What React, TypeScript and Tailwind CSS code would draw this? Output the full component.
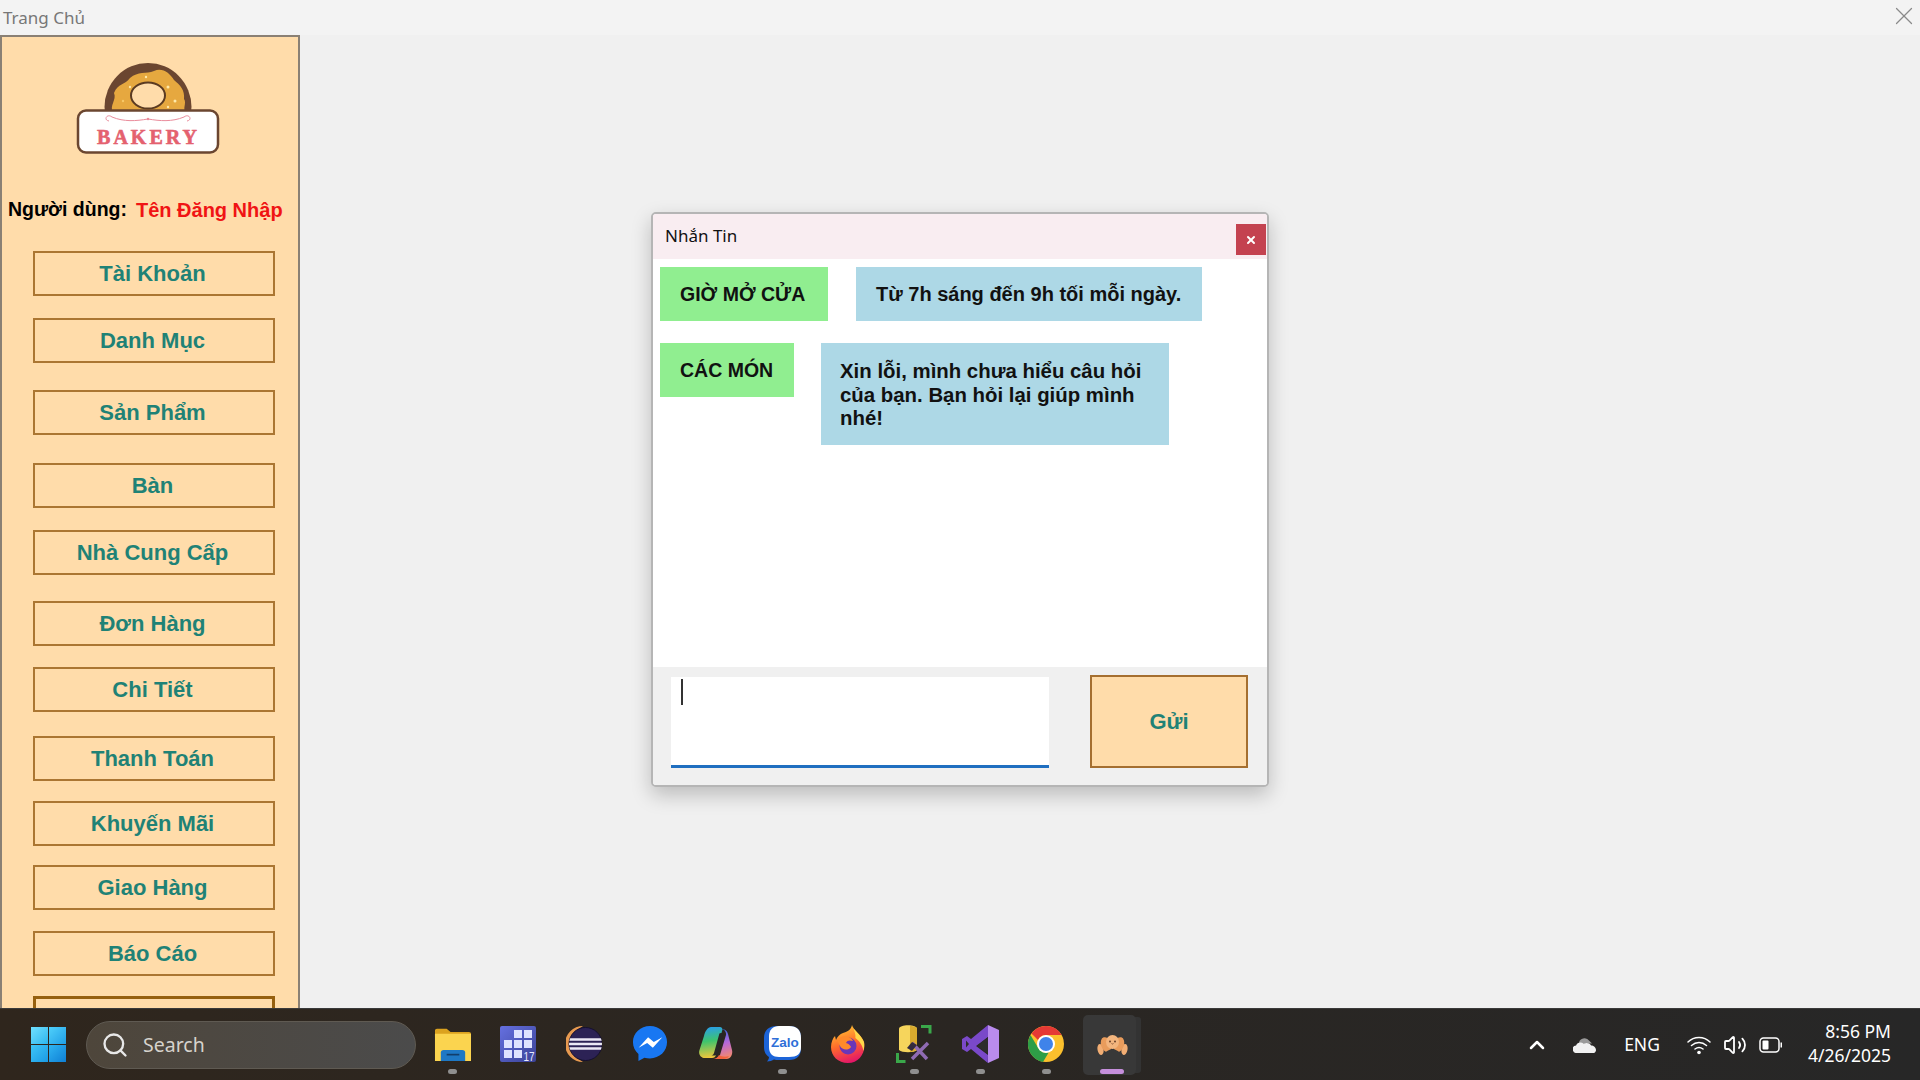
import { ChevronUp, Search, Volume2, X } from "lucide-react";

const menu = [
  { label: "Tài Khoản", cls: "mt-[31px]" },
  { label: "Danh Mục", cls: "mt-[22px]" },
  { label: "Sản Phẩm", cls: "mt-[27px]" },
  { label: "Bàn", cls: "mt-[28px]" },
  { label: "Nhà Cung Cấp", cls: "mt-[22px]" },
  { label: "Đơn Hàng", cls: "mt-[26px]" },
  { label: "Chi Tiết", cls: "mt-[21px]" },
  { label: "Thanh Toán", cls: "mt-[24px]" },
  { label: "Khuyến Mãi", cls: "mt-[20px]" },
  { label: "Giao Hàng", cls: "mt-[19px]" },
  { label: "Báo Cáo", cls: "mt-[21px]" },
];

function Logo() {
  return (
    <svg width="146" height="94" viewBox="0 0 146 94" className="block">
      <ellipse cx="72" cy="44" rx="43.500" ry="44" fill="#6b4630" />
      <path
        d="M37 50C33 42 41 37 38 30 42 20 49 22 54 15 62 8 70 11 78 8 86 4 94 10 98 17 104 22 109 27 108 36 111 40 106 46 110 50Z"
        fill="#e6a83f"
      />
      <circle cx="92" cy="24" r="1.500" fill="#ffe9a8" />
      <circle cx="99" cy="38" r="1.500" fill="#ffe9a8" />
      <circle cx="54" cy="24" r="1.200" fill="#ffe9a8" />
      <circle cx="92" cy="44" r="1.200" fill="#ffe9a8" />
      <circle cx="70" cy="14" r="1.200" fill="#ffe9a8" />
      <circle cx="47" cy="38" r="1.200" fill="#f6c868" />
      <ellipse cx="72" cy="32.500" rx="17" ry="13" fill="#ffdcaa" stroke="#5b3b22" strokeWidth="2" />
      <rect x="2" y="47.500" width="140" height="42" rx="8" fill="#fff" stroke="#6b4630" strokeWidth="2.500" />
      <path
        d="M36 54c-5-4-9 3-3 4M108 54c5-4 9 3 3 4M36 54c12 5 24 4 36 2 12 2 24 3 36-2"
        fill="none"
        stroke="#ea8c9c"
        strokeWidth="1"
      />
      <circle cx="72" cy="56" r="1.200" fill="#ea8c9c" />
      <text
        x="72.500"
        y="81"
        textAnchor="middle"
        fill="#e4616f"
        stroke="#e4616f"
        strokeWidth="0.600"
        fontFamily="'Liberation Serif', serif"
        fontWeight="700"
        fontSize="20"
        letterSpacing="3"
      >
        BAKERY
      </text>
    </svg>
  );
}

function Folder() {
  return (
    <svg width="37" height="34" viewBox="0 0 38 40" preserveAspectRatio="none">
      <path d="M1 4a2 2 0 0 1 2-2h10l4 4h19a2 2 0 0 1 2 2v4H1z" fill="#dba21f" />
      <path d="M1 8h37v32H1z" fill="#fbd44f" />
      <path d="M7 40v-10a3 3 0 0 1 3-3h19a3 3 0 0 1 3 3v10z" fill="#1e78c4" />
      <path d="M13 32.500h13" stroke="#123e6b" strokeWidth="2" />
    </svg>
  );
}

function GridApp() {
  return (
    <svg width="36" height="36" viewBox="0 0 36 36">
      <defs>
        <linearGradient id="gra" x1="0" y1="0" x2="1" y2="1">
          <stop offset="0" stopColor="#6570e0" />
          <stop offset="1" stopColor="#3a4296" />
        </linearGradient>
      </defs>
      <rect width="36" height="36" rx="2" fill="url(#gra)" />
      {[
        [14, 4],
        [24, 4],
        [4, 14],
        [14, 14],
        [24, 14],
        [4, 24],
        [14, 24],
      ].map(([x, y]) => (
        <rect key={`${x}-${y}`} x={x} y={y} width="8" height="8" fill="#dfe3ff" />
      ))}
      <text x="23.500" y="34.500" fill="#e8eaff" fontFamily="'Liberation Sans', sans-serif" fontSize="12.500" textLength="11" lengthAdjust="spacingAndGlyphs">
        17
      </text>
    </svg>
  );
}

function Eclipse() {
  return (
    <svg width="36" height="36" viewBox="0 0 36 36">
      <defs>
        <clipPath id="ecl">
          <circle cx="19.500" cy="18" r="16.500" />
        </clipPath>
      </defs>
      <path d="M17 0a18 18 0 0 0 0 36A20 20 0 0 1 17 0z" fill="#e89a50" />
      <circle cx="19.500" cy="18" r="16.500" fill="#2c2255" stroke="#15102e" strokeWidth="1" />
      <g clipPath="url(#ecl)">
        <path d="M2 13.500h36M2 18h36M2 22.500h36" stroke="#ebe8f5" strokeWidth="2.400" />
      </g>
    </svg>
  );
}

function Messenger() {
  return (
    <svg width="36" height="38" viewBox="0 0 38 40">
      <path
        d="M19 1C9 1 1 8.400 1 18c0 5 2.200 9.500 5.800 12.500V38l6.300-3.600c1.900.5 3.800.8 5.900.8 10 0 18-7.400 18-17.200S29 1 19 1z"
        fill="#1877f2"
      />
      <path d="M7 24l10-11 6 5 9-5-10 11-6-5z" fill="#fff" />
    </svg>
  );
}

function Copilot() {
  return (
    <svg width="34" height="36" viewBox="0 0 34 36">
      <defs>
        <linearGradient id="cpa" x1="0.4" y1="0" x2="0.5" y2="1">
          <stop offset="0" stopColor="#2a9fe8" />
          <stop offset="0.45" stopColor="#3ec46d" />
          <stop offset="1" stopColor="#f4c53a" />
        </linearGradient>
        <linearGradient id="cpb" x1="0.4" y1="0" x2="0.6" y2="1">
          <stop offset="0" stopColor="#3569e0" />
          <stop offset="0.5" stopColor="#b868d8" />
          <stop offset="1" stopColor="#f58a6a" />
        </linearGradient>
      </defs>
      <path d="M22 3c3 0 6 1 7 5l4 16c1 4-1 9-6 9H15c3 0 5-2 6-4l6-20c.5-2-1-6-5-6z" fill="url(#cpb)" />
      <path d="M12 1h9c2 0 3 2 2 4l-6 24c-.5 2-2 3-4 3H6c-4 0-7-4-5.500-8L5 10c1-5 4-9 7-9z" fill="url(#cpa)" />
      <path d="M20 9l-5 18c-.5 1.500-1.500 2.500-2.500 2.500h3.500c1.500 0 2.500-1 3-2.500l5-18c.3-1.500-.3-2-2-2s-1.700.8-2 2z" fill="#262626" />
      <path d="M20 29c-1 2-3 4-6 4h11c2 0 4-1 5-3-3 1-7 1-10-1z" fill="#f0623e" />
    </svg>
  );
}

function Zalo() {
  return (
    <svg width="37" height="36" viewBox="0 0 37 36">
      <path d="M13 0h12c8 0 12 4 12 12v10c0 8-4 12-12 12H15c-2 0-4 0-5-.5-2 1-4 2-7 2 1-1 2-3 2-4.500C2 29 0 26 0 21V12C0 4 5 0 13 0z" fill="#1c64d8" />
      <path d="M15 0h10c8 0 12 4 12 12v9c0 7-4 10-12 10H15c-6 0-10-3-10-10V10C5 4 9 0 15 0z" fill="#fff" />
      <text x="21" y="21" textAnchor="middle" fill="#2f6fd8" fontFamily="'Liberation Sans', sans-serif" fontWeight="700" fontSize="13.500">
        Zalo
      </text>
    </svg>
  );
}

function Firefox() {
  return (
    <svg width="34" height="38" viewBox="0 0 34 38">
      <defs>
        <linearGradient id="ffa" x1="0.3" y1="0" x2="0.6" y2="1">
          <stop offset="0" stopColor="#ffc933" />
          <stop offset="0.5" stopColor="#ff6b2b" />
          <stop offset="1" stopColor="#e3136a" />
        </linearGradient>
      </defs>
      <path d="M21 0c1 5 9 9 12 17 2 11-5 21-16 21C7 38 0 31 0 22c0-5 2-9 4-11l1 4c1-3 4-6 7-7 4-1 8-3 9-8z" fill="url(#ffa)" />
      <path d="M21 0c1 5 9 9 12 17 .5 3 .3 6-.6 9-1-6-4-10-8-13C25 9 23 5 21 0z" fill="#ffd84a" />
      <circle cx="17" cy="21" r="8.500" fill="#6a36b8" />
      <path d="M6 15c4-5 13-5 16 1-3-1-6-1-7 2 4 1 5 4 5 4-3 4-9 3-11-1-1-2-2-4-3-6z" fill="#ff8a2b" />
    </svg>
  );
}

function DbTools() {
  return (
    <svg width="36" height="40" viewBox="0 0 36 40">
      <path d="M25 2.500h9v7M1.500 29v8.500h8" fill="none" stroke="#3aa84a" strokeWidth="3" />
      <path d="M3 5c0-5 18-5 18 0v21c-3 3-15 3-18 0z" fill="#f6d55c" />
      <path d="M14 2c4 0 7 1 7 3v21c-2 1-5 2-7 2z" fill="#d9ab2e" />
      <path d="M16 19l15 16M32 19L16 35" stroke="#8f6bb3" strokeWidth="3.500" />
      <path d="M11 24l5-6 5 3-5 6z" fill="#332b3d" />
    </svg>
  );
}

function VisualStudio() {
  return (
    <svg width="37" height="38" viewBox="0 0 37 38">
      <path d="M26 0l11 5v28l-11 5z" fill="#b98bed" />
      <path d="M26 0v12L14 21l12 9-.2 8L9 24l-4 3-5-3V14l5-3 4 3z" fill="#7a49c9" />
      <path d="M4 15.500v7l3-3.500z" fill="#2c2c2c" />
      <path d="M26 12v17l-11-8z" fill="#2c2c2c" />
    </svg>
  );
}

function Chrome() {
  return (
    <svg width="36" height="36" viewBox="0 0 36 36">
      <circle cx="18" cy="18" r="18" fill="#fbc02d" />
      <path d="M18 0a18 18 0 0 1 15.600 9H18a9 9 0 0 0-8 5L3.500 7.500A18 18 0 0 1 18 0z" fill="#e53935" />
      <path d="M2.500 9L10.200 22a9 9 0 0 0 10.500 4.500L15 36A18 18 0 0 1 2.500 9z" fill="#2e9e47" />
      <circle cx="18" cy="18" r="9" fill="#fff" />
      <circle cx="18" cy="18" r="7" fill="#3f83ea" />
    </svg>
  );
}

function Croissant() {
  return (
    <svg width="31" height="20" viewBox="0 0 31 20">
      <ellipse cx="3.500" cy="14.500" rx="3" ry="5.500" transform="rotate(-10 3.500 14.500)" fill="#f2ae74" />
      <ellipse cx="27.500" cy="14.500" rx="3" ry="5.500" transform="rotate(10 27.500 14.500)" fill="#f2ae74" />
      <ellipse cx="9" cy="9.500" rx="5" ry="7.500" transform="rotate(-18 9 9.500)" fill="#e99c5c" />
      <ellipse cx="22" cy="9.500" rx="5" ry="7.500" transform="rotate(18 22 9.500)" fill="#e99c5c" />
      <ellipse cx="15.500" cy="7" rx="6.500" ry="7" fill="#f3b57e" />
      <ellipse cx="15.500" cy="19.500" rx="7.500" ry="5" fill="#383838" />
      <circle cx="13" cy="6.500" r="0.900" fill="#5b3420" />
      <circle cx="18" cy="6.500" r="0.900" fill="#5b3420" />
      <path d="M14.500 8.500c.6.700 1.400.700 2 0" stroke="#5b3420" strokeWidth="0.700" fill="none" />
    </svg>
  );
}

function Slot({ children, dot }: { children: React.ReactNode; dot?: boolean }) {
  return (
    <div className="relative flex h-[72px] w-[66px] items-center justify-center pb-[2px]">
      {children}
      {dot && <span className="absolute bottom-[7px] h-[5px] w-[9px] rounded-full bg-[#8f8f8f]" />}
    </div>
  );
}

function WinLogo() {
  return (
    <div className="grid h-[35px] w-[35px] grid-cols-2 gap-[1px]">
      <span className="bg-gradient-to-br from-[#6fe0ff] to-[#29b6ee]" />
      <span className="bg-gradient-to-br from-[#4fd0fb] to-[#1e9fe6]" />
      <span className="bg-gradient-to-br from-[#3ec6f7] to-[#1a9ae4]" />
      <span className="bg-gradient-to-br from-[#2fb4f2] to-[#0f7fd4]" />
    </div>
  );
}

function Wifi() {
  return (
    <svg width="24" height="20" viewBox="0 0 24 20" fill="none" stroke="#fff" strokeWidth="1.500" strokeLinecap="round">
      <path d="M1 7c6-6 16-6 22 0M4.500 10.500c4.500-4 10.500-4 15 0M8 14c2.500-2 5.500-2 8 0" />
      <circle cx="12" cy="17.500" r="1.800" fill="#fff" stroke="none" />
    </svg>
  );
}

function Battery() {
  return (
    <svg width="24" height="16" viewBox="0 0 24 16" fill="none">
      <rect x="1" y="1" width="19" height="14" rx="3.500" stroke="#fff" strokeWidth="1.500" />
      <rect x="3.500" y="3.500" width="6" height="9" rx="1" fill="#fff" />
      <path d="M21.500 5.500h1.500v5h-1.500z" fill="#fff" />
    </svg>
  );
}

function Cloud() {
  return (
    <svg width="24" height="16" viewBox="0 0 25 17">
      <path d="M6 7a6 6 0 0 1 11-3l3 3z" fill="#9a9a9a" />
      <path d="M4 17a4 4 0 0 1-1-8c1-3 5-4 8-2 3-1 6-1 8 2 3 0 6 3 5 6-.5 1-1 2-2 2z" fill="#f1f1f1" />
    </svg>
  );
}

export default function App() {
  const sans = "font-['Liberation_Sans',Arial,sans-serif]";
  const ui = "font-['Noto_Sans',sans-serif]";

  return (
    <div className="flex h-screen w-full flex-col overflow-hidden bg-[#f0f0f0]">
      {/* title bar */}
      <header className="flex h-[35px] shrink-0 items-center justify-between bg-[#f3f3f3] pl-[3px] pr-[1px]">
        <span className={`${ui} text-[17px] leading-none text-[#777]`}>Trang Chủ</span>
        <X className="mb-[4px] h-[30px] w-[30px] text-[#8a8a8a]" strokeWidth={1} />
      </header>

      <main className="flex min-h-0 flex-1">
        {/* sidebar */}
        <aside className={`${sans} flex h-full w-[300px] shrink-0 flex-col overflow-hidden border-x-2 border-t-2 border-[#8a8074] bg-[#ffdcaa]`}>
          <div className="ml-[74px] mt-[26px]">
            <Logo />
          </div>
          <div className="ml-[6px] mt-[43px] flex h-[24px] items-center gap-[9px] font-bold leading-none">
            <span className="text-[19.5px] text-black">Người dùng:</span>
            <span className="text-[20px] text-[#f01414]">Tên Đăng Nhập</span>
          </div>
          <div className="flex flex-col pl-[31px]">
            {menu.map((m) => (
              <button
                key={m.label}
                className={`${m.cls} h-[45px] w-[242px] shrink-0 border-2 border-[#ab7632] pr-[3px] text-[22px] font-bold text-[#1f8276]`}
              >
                {m.label}
              </button>
            ))}
            <button className="mt-[20px] h-[45px] w-[242px] shrink-0 border-[3px] border-[#96600f] pb-[3px] pr-[3px] text-[22px] font-bold text-[#1f8276]">
              Thống Kê
            </button>
          </div>
        </aside>

        {/* chat window */}
        <div className="ml-[351px] mt-[177px]">
          <section className="flex h-[575px] w-[618px] flex-col overflow-hidden rounded-[5px] border-2 border-[#b5b5b5] bg-white shadow-[0_8px_20px_rgba(0,0,0,0.22)]">
            <div className="flex h-[45px] shrink-0 justify-between bg-[#f9edf1]">
              <span className={`${ui} ml-[12px] mt-[10px] text-[17px] leading-[24px] text-[#111]`}>Nhắn Tin</span>
              <button className="mr-[1px] mt-[10px] flex h-[31px] w-[30px] items-center justify-center bg-[#c44250] text-white">
                <X className="h-[12px] w-[12px]" strokeWidth={4} />
              </button>
            </div>

            <div className={`${sans} flex-1 pl-[7px] pt-[8px] text-[20px] font-bold leading-[23.5px] text-[#111]`}>
              <div className="flex items-start gap-[28px]">
                <div className="flex h-[54px] w-[168px] items-center bg-[#90ee90] pl-[20px] pt-[2px] text-[19.5px]">GIỜ MỞ CỬA</div>
                <div className="flex h-[54px] w-[346px] items-center bg-[#add8e6] pl-[20px] pt-[2px]">Từ 7h sáng đến 9h tối mỗi ngày.</div>
              </div>
              <div className="mt-[22px] flex items-start gap-[27px]">
                <div className="flex h-[54px] w-[134px] items-center bg-[#90ee90] pl-[20px] pt-[2px] text-[19.5px]">CÁC MÓN</div>
                <div className="w-[348px] bg-[#add8e6] pb-[14px] pl-[19px] pr-[19px] pt-[17px] text-[20.4px]">
                  Xin lỗi, mình chưa hiểu câu hỏi của bạn. Bạn hỏi lại giúp mình nhé!
                </div>
              </div>
            </div>

            <div className="flex h-[118px] shrink-0 items-start bg-[#f0f0f0] pl-[18px] pt-[8px]">
              <div className="mt-[2px] h-[91px] w-[378px] border-b-[3px] border-[#1f6fc0] bg-white pl-[10px] pt-[2px]">
                <div className="h-[26px] w-[2px] bg-[#333]" />
              </div>
              <button className={`${sans} ml-[41px] h-[93px] w-[158px] border-2 border-[#a56f30] bg-[#ffdcaa] text-[22px] font-bold text-[#1f8276]`}>
                Gửi
              </button>
            </div>
          </section>
        </div>
      </main>

      {/* taskbar */}
      <footer className="flex h-[72px] shrink-0 items-center border-t border-[#3a3a3a] bg-gradient-to-r from-[#2f261d] via-[#2a2622] to-[#272727] text-white">
        <div className="ml-[31px]">
          <WinLogo />
        </div>
        <div className="ml-[20px] flex h-[48px] w-[330px] items-center rounded-full border border-[#5f5a52] bg-gradient-to-r from-[#4e463b] to-[#4b4b4b] pl-[14px]">
          <Search className="h-[28px] w-[28px] text-[#e8e8e8]" strokeWidth={2} />
          <span className={`${ui} ml-[14px] text-[19.5px] text-[#d6d3cd]`}>Search</span>
        </div>
        <div className="ml-[3px] flex">
          <Slot dot><Folder /></Slot>
          <Slot><GridApp /></Slot>
          <Slot><Eclipse /></Slot>
          <Slot><Messenger /></Slot>
          <Slot><Copilot /></Slot>
          <Slot dot><Zalo /></Slot>
          <Slot><Firefox /></Slot>
          <Slot dot><DbTools /></Slot>
          <Slot dot><VisualStudio /></Slot>
          <Slot dot><Chrome /></Slot>
          <div className="relative ml-[4px] flex h-[60px] w-[53px] items-center justify-center self-center rounded-[5px] bg-[#383838] pl-[6px] shadow-[7px_0_0_-2px_#333]">
            <Croissant />
            <span className="absolute bottom-[1px] left-[17px] h-[5px] w-[24px] rounded-full bg-[#c58fdc]" />
          </div>
        </div>
        <div className={`${ui} ml-auto flex items-center pr-[29px]`}>
          <ChevronUp className="h-[24px] w-[24px]" strokeWidth={2.5} />
          <div className="ml-[24px]"><Cloud /></div>
          <span className="ml-[27px] text-[17.5px]">ENG</span>
          <div className="ml-[27px]"><Wifi /></div>
          <Volume2 className="ml-[12px] h-[24px] w-[24px]" strokeWidth={1.8} />
          <div className="ml-[12px]"><Battery /></div>
          <div className="mb-[3px] ml-[25px] text-right text-[17.5px] leading-[24px]">
            <div>8:56 PM</div>
            <div>4/26/2025</div>
          </div>
        </div>
      </footer>
    </div>
  );
}
